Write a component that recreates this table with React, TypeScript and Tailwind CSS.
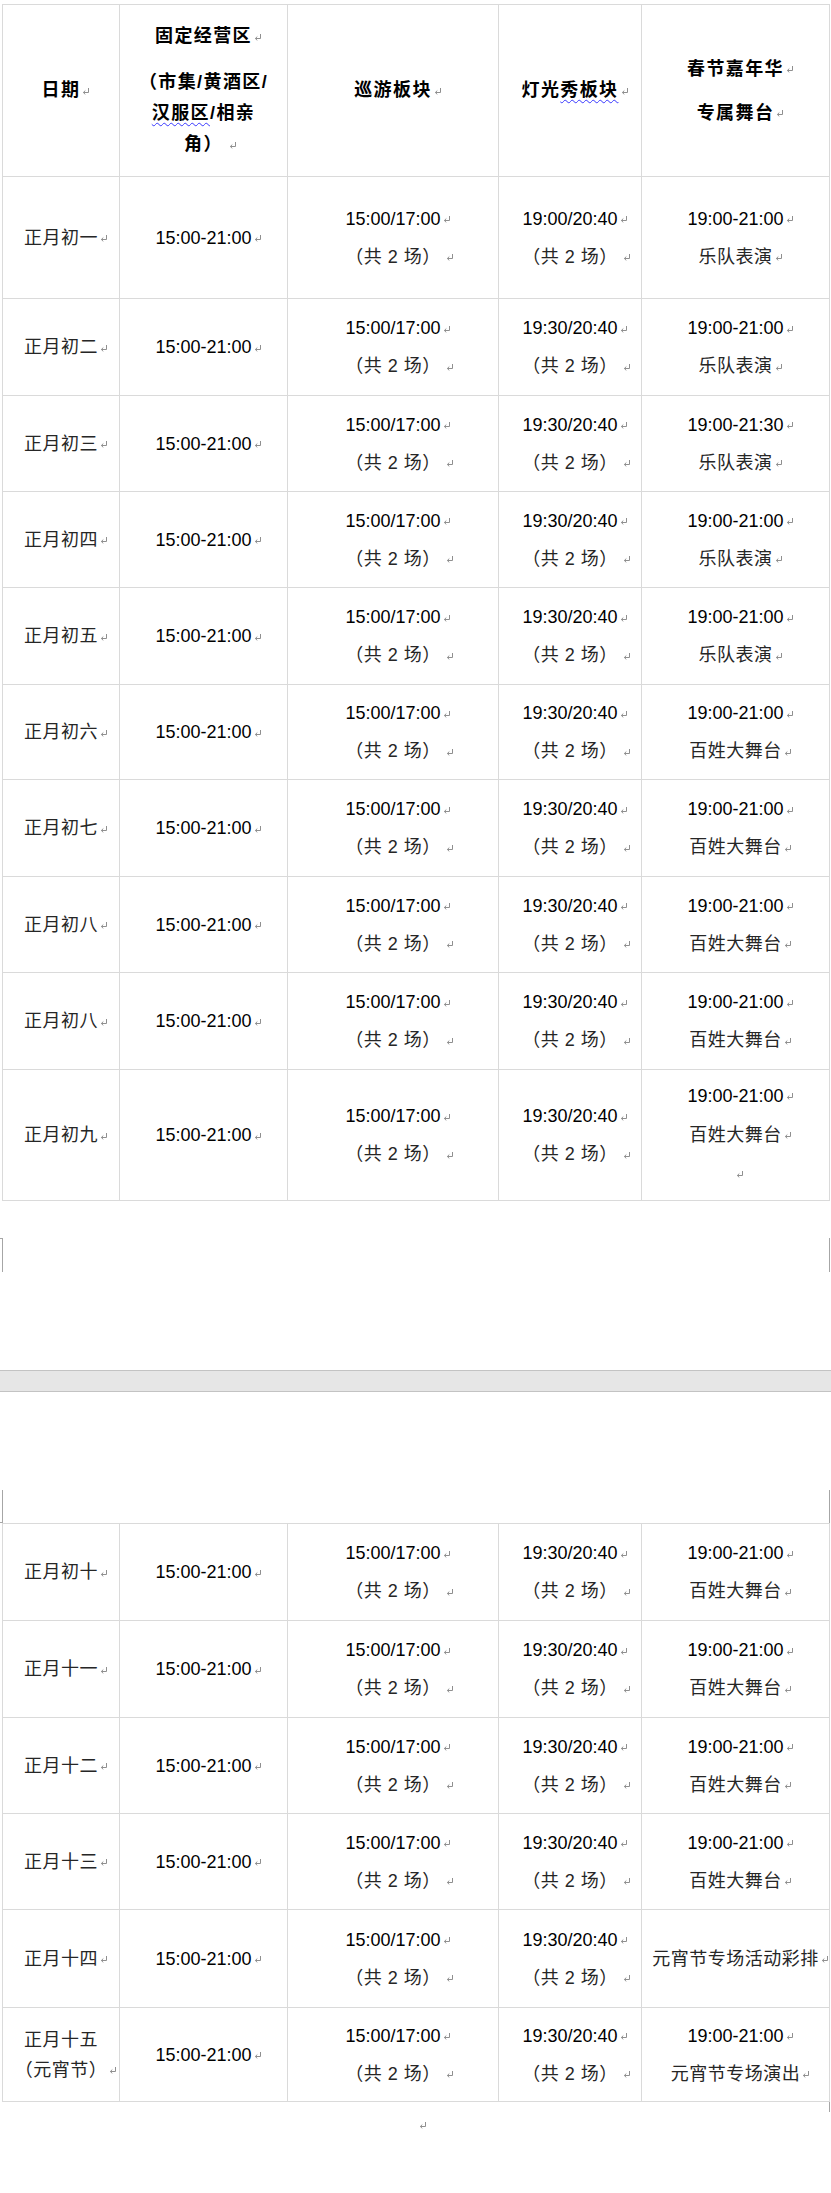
import React from "react";

const Pil = ({ gap = "ml-[2px]" }: { gap?: string }) => (
  <span className="inline-block w-0 whitespace-nowrap">
    <svg className={gap + " inline-block"} width="8" height="7" viewBox="0 0 8 7" fill="none">
      <path d="M6.5 0V4.5H1.5" stroke="#8f8f8f" strokeWidth="1" />
      <path d="M3.3 2.6L1.3 4.5L3.3 6.4" stroke="#8f8f8f" strokeWidth="1" />
    </svg>
  </span>
);

const cellBase =
  "border-r border-b border-[#dadada] flex flex-col items-center justify-center text-center whitespace-nowrap";

type Row = {
  h: string;
  date: React.ReactNode;
  a: string;
  b: string;
  c: React.ReactNode;
};

const Time = ({ t }: { t: string }) => (
  <div className="leading-[38px] text-black">
    {t}
    <Pil />
  </div>
);

const Count = () => (
  <div className="leading-[38px] text-[#262626] tracking-[0.5px]">
    （共 2 场）
    <Pil gap="ml-[5px]" />
  </div>
);

const Stage = ({ t, s }: { t: string; s: string }) => (
  <>
    <div className="leading-[38px] text-black">
      {t}
      <Pil />
    </div>
    <div className="leading-[38px] text-[#262626] tracking-[0.5px]">
      {s}
      <Pil />
    </div>
  </>
);

const Date1 = ({ d }: { d: string }) => (
  <div className="leading-[30px] text-[#262626] tracking-[0.5px]">
    {d}
    <Pil />
  </div>
);

const rows1: Row[] = [
  { h: "h-[122px]", date: <Date1 d="正月初一" />, a: "15:00/17:00", b: "19:00/20:40", c: <Stage t="19:00-21:00" s="乐队表演" /> },
  { h: "h-[97px]", date: <Date1 d="正月初二" />, a: "15:00/17:00", b: "19:30/20:40", c: <Stage t="19:00-21:00" s="乐队表演" /> },
  { h: "h-[96px]", date: <Date1 d="正月初三" />, a: "15:00/17:00", b: "19:30/20:40", c: <Stage t="19:00-21:30" s="乐队表演" /> },
  { h: "h-[96px]", date: <Date1 d="正月初四" />, a: "15:00/17:00", b: "19:30/20:40", c: <Stage t="19:00-21:00" s="乐队表演" /> },
  { h: "h-[97px]", date: <Date1 d="正月初五" />, a: "15:00/17:00", b: "19:30/20:40", c: <Stage t="19:00-21:00" s="乐队表演" /> },
  { h: "h-[95px]", date: <Date1 d="正月初六" />, a: "15:00/17:00", b: "19:30/20:40", c: <Stage t="19:00-21:00" s="百姓大舞台" /> },
  { h: "h-[97px]", date: <Date1 d="正月初七" />, a: "15:00/17:00", b: "19:30/20:40", c: <Stage t="19:00-21:00" s="百姓大舞台" /> },
  { h: "h-[96px]", date: <Date1 d="正月初八" />, a: "15:00/17:00", b: "19:30/20:40", c: <Stage t="19:00-21:00" s="百姓大舞台" /> },
  { h: "h-[97px]", date: <Date1 d="正月初八" />, a: "15:00/17:00", b: "19:30/20:40", c: <Stage t="19:00-21:00" s="百姓大舞台" /> },
  {
    h: "h-[131px]",
    date: <Date1 d="正月初九" />,
    a: "15:00/17:00",
    b: "19:30/20:40",
    c: (
      <>
        <div className="leading-[39px] text-black">
          19:00-21:00
          <Pil />
        </div>
        <div className="leading-[39px] text-[#262626] tracking-[0.5px]">
          百姓大舞台
          <Pil />
        </div>
        <div className="leading-[39px] h-[39px]">
          <Pil gap="ml-0" />
        </div>
      </>
    ),
  },
];

const rows2: Row[] = [
  { h: "h-[97px]", date: <Date1 d="正月初十" />, a: "15:00/17:00", b: "19:30/20:40", c: <Stage t="19:00-21:00" s="百姓大舞台" /> },
  { h: "h-[97px]", date: <Date1 d="正月十一" />, a: "15:00/17:00", b: "19:30/20:40", c: <Stage t="19:00-21:00" s="百姓大舞台" /> },
  { h: "h-[96px]", date: <Date1 d="正月十二" />, a: "15:00/17:00", b: "19:30/20:40", c: <Stage t="19:00-21:00" s="百姓大舞台" /> },
  { h: "h-[96px]", date: <Date1 d="正月十三" />, a: "15:00/17:00", b: "19:30/20:40", c: <Stage t="19:00-21:00" s="百姓大舞台" /> },
  {
    h: "h-[98px]",
    date: <Date1 d="正月十四" />,
    a: "15:00/17:00",
    b: "19:30/20:40",
    c: (
      <div className="leading-[38px] text-[#262626] tracking-[0.5px]">
        元宵节专场活动彩排
        <Pil />
      </div>
    ),
  },
  {
    h: "h-[94px]",
    date: (
      <>
        <div className="leading-[30px] text-[#262626] tracking-[0.5px]">正月十五</div>
        <div className="leading-[30px] text-[#262626] tracking-[0.5px]">
          （元宵节）
          <Pil />
        </div>
      </>
    ),
    a: "15:00/17:00",
    b: "19:30/20:40",
    c: <Stage t="19:00-21:00" s="元宵节专场演出" />,
  },
];

const BodyRows = ({ rows }: { rows: Row[] }) => (
  <>
    {rows.map((r, i) => (
      <React.Fragment key={i}>
        <div className={cellBase + " " + r.h}>{r.date}</div>
        <div className={cellBase + " " + r.h}>
          <div className="leading-[30px] text-black">
            15:00-21:00
            <Pil />
          </div>
        </div>
        <div className={cellBase + " " + r.h}>
          <Time t={r.a} />
          <Count />
        </div>
        <div className={cellBase + " " + r.h}>
          <Time t={r.b} />
          <Count />
        </div>
        <div className={cellBase + " " + r.h}>{r.c}</div>
      </React.Fragment>
    ))}
  </>
);

const wavy = "underline decoration-wavy decoration-[#3737ff] decoration-1 underline-offset-[3px]";

const gridCls =
  "ml-[2px] w-[828px] border-l border-t border-[#dadada] grid grid-cols-[117px_168px_211px_143px_188px]";

export default function App() {
  return (
    <div className="w-[831px] min-h-[2193px] bg-white pt-[4px] text-[18px] font-['Liberation_Sans','Noto_Sans_CJK_SC',sans-serif]">
      {/* Table page 1 */}
      <div className={gridCls}>
        <div className={cellBase + " h-[172px] font-bold text-black tracking-[1.4px]"}>
          <div className="leading-[31px]">
            日期
            <Pil />
          </div>
        </div>
        <div className={cellBase + " h-[172px] font-bold text-black tracking-[1.4px]"}>
          <div className="leading-[31px]">
            固定经营区
            <Pil />
          </div>
          <div className="mt-[15px] leading-[31px]">
            （市集/黄酒区/
            <br />
            <span className={wavy}>汉服区</span>/相亲
            <br />
            角）
            <Pil gap="ml-[6px]" />
          </div>
        </div>
        <div className={cellBase + " h-[172px] font-bold text-black tracking-[1.4px]"}>
          <div className="leading-[31px]">
            巡游板块
            <Pil />
          </div>
        </div>
        <div className={cellBase + " h-[172px] font-bold text-black tracking-[1.4px]"}>
          <div className="leading-[31px]">
            灯光<span className={wavy}>秀板块</span>
            <Pil />
          </div>
        </div>
        <div className={cellBase + " h-[172px] font-bold text-black tracking-[1.4px]"}>
          <div className="leading-[44px]">
            春节嘉年华
            <Pil />
          </div>
          <div className="leading-[44px]">
            专属舞台
            <Pil />
          </div>
        </div>
        <BodyRows rows={rows1} />
      </div>

      {/* page end marks */}
      <div className="mt-[37px] flex justify-between h-[34px]">
        <div className="w-[3px] h-full border-t border-r border-[#a6a6a6]" />
        <div className="w-px h-full bg-[#a6a6a6] mr-[1px]" />
      </div>

      {/* page gap */}
      <div className="mt-[98px] h-[22px] bg-[#e6e6e6] border-y border-[#c3c3c3]" />

      {/* page start marks */}
      <div className="mt-[98px] flex justify-between h-[33px]">
        <div className="w-[3px] h-full border-b border-r border-[#a6a6a6]" />
        <div className="w-px h-full bg-[#a6a6a6] mr-[1px]" />
      </div>

      {/* Table page 2 */}
      <div className={gridCls}>
        <BodyRows rows={rows2} />
      </div>

      <div className="flex justify-end h-[10px]">
        <div className="w-px h-full bg-[#a6a6a6] mr-[1px]" />
      </div>
      <div className="mt-[10px] pl-[419px] h-[7px] flex">
        <svg width="8" height="7" viewBox="0 0 8 7" fill="none">
          <path d="M6.5 0V4.5H1.5" stroke="#8f8f8f" strokeWidth="1" />
          <path d="M3.3 2.6L1.3 4.5L3.3 6.4" stroke="#8f8f8f" strokeWidth="1" />
        </svg>
      </div>
    </div>
  );
}
